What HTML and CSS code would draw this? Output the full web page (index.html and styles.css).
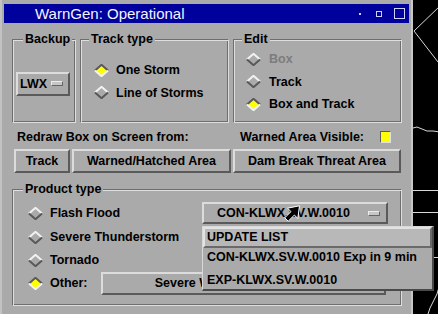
FILE: index.html
```html
<!DOCTYPE html>
<html>
<head>
<meta charset="utf-8">
<link rel="stylesheet" href="styles.css">
</head>
<body>
<svg class="defs" width="0" height="0">
  <symbol id="d-off" viewBox="0 0 15 13">
    <polygon points="1,6.5 7.5,0.5 14,6.5 7.5,12.5" fill="#aaaaaa"/>
    <polyline points="1,6.5 7.5,0.8 14,6.5" fill="none" stroke="#f2f2f2" stroke-width="2"/>
    <polyline points="1,6.5 7.5,12.2 14,6.5" fill="none" stroke="#585858" stroke-width="2"/>
  </symbol>
  <symbol id="d-on" viewBox="0 0 15 13">
    <polygon points="1,6.5 7.5,0.5 14,6.5 7.5,12.5" fill="#ffff00"/>
    <polyline points="1,6.5 7.5,0.8 14,6.5" fill="none" stroke="#585858" stroke-width="2"/>
    <polyline points="1,6.5 7.5,12.2 14,6.5" fill="none" stroke="#f2f2f2" stroke-width="2"/>
  </symbol>
</svg>
<div class="screen">
  <div class="window">
    <div class="titlebar">
      <span class="title">WarnGen: Operational</span>
      <span class="tb-icons"><i class="tb-dot"></i><i class="tb-min"></i><i class="tb-max"></i></span>
    </div>
    <div class="content">
      <div class="row-top">
        <div class="group g-backup">
          <div class="legend">Backup</div>
          <div class="g-body g-center">
            <div class="optbtn lwx"><span>LWX</span><i class="ind"></i></div>
          </div>
        </div>
        <div class="group g-track">
          <div class="legend">Track type</div>
          <div class="g-body g-radios">
            <div class="radio"><svg class="dia"><use href="#d-on"/></svg><span>One Storm</span></div>
            <div class="radio"><svg class="dia"><use href="#d-off"/></svg><span>Line of Storms</span></div>
          </div>
        </div>
        <div class="group g-edit">
          <div class="legend">Edit</div>
          <div class="g-body g-radios">
            <div class="radio disabled"><svg class="dia"><use href="#d-off"/></svg><span>Box</span></div>
            <div class="radio"><svg class="dia"><use href="#d-off"/></svg><span>Track</span></div>
            <div class="radio"><svg class="dia"><use href="#d-on"/></svg><span>Box and Track</span></div>
          </div>
        </div>
      </div>
      <div class="row-labels">
        <span>Redraw Box on Screen from:</span>
        <span class="visible">Warned Area Visible:<i class="check"></i></span>
      </div>
      <div class="row-buttons">
        <div class="btn b-track">Track</div>
        <div class="btn b-warned">Warned/Hatched Area</div>
        <div class="btn b-dam">Dam Break Threat Area</div>
      </div>
      <div class="group g-product">
        <div class="legend">Product type</div>
        <div class="g-body p-body">
          <div class="p-row r1">
            <div class="radio p-radio w1"><svg class="dia"><use href="#d-off"/></svg><span>Flash Flood</span></div>
            <div class="optbtn con"><span>CON-KLWX.SV.W.0010</span><i class="ind"></i></div>
          </div>
          <div class="p-row r2">
            <div class="radio p-radio"><svg class="dia"><use href="#d-off"/></svg><span>Severe Thunderstorm</span></div>
          </div>
          <div class="p-row r3">
            <div class="radio p-radio"><svg class="dia"><use href="#d-off"/></svg><span>Tornado</span></div>
          </div>
          <div class="p-row r4">
            <div class="radio p-radio w4"><svg class="dia"><use href="#d-on"/></svg><span>Other:</span></div>
            <div class="btn b-severe">Severe Weather Statement</div>
          </div>
        </div>
      </div>
    </div>
  </div>
  <div class="map">
    <svg width="27" height="314" viewBox="0 0 27 314">
      <polyline points="27,6 1,31 25,62" fill="none" stroke="#d8d8d8" stroke-width="1"/>
      <polyline points="0,128 4,127 9,129 14,131 20,131 27,132" fill="none" stroke="#d8d8d8" stroke-width="1"/>
      <line x1="0" y1="190.5" x2="27" y2="190.5" stroke="#d8d8d8" stroke-width="1"/>
      <line x1="0" y1="212.5" x2="27" y2="212.5" stroke="#d8d8d8" stroke-width="1"/>
      <line x1="20" y1="257.5" x2="27" y2="257.5" stroke="#d8d8d8" stroke-width="1"/>
      <polyline points="27,284 24,294 20,302 17,308 15,314" fill="none" stroke="#d8d8d8" stroke-width="1"/>
    </svg>
  </div>
</div>
<div class="popup">
  <div class="pop-item active">UPDATE LIST</div>
  <div class="pop-item i2">CON-KLWX.SV.W.0010 Exp in 9 min</div>
  <div class="pop-item i3">EXP-KLWX.SV.W.0010</div>
</div>
<svg class="cursor" width="17" height="17" viewBox="0 0 17 17">
  <polygon points="15.5,0.8 3.5,3.2 7,6.6 0.8,12.8 4.2,16.2 10.4,10 13.8,13.5" fill="#000" stroke="#fff" stroke-width="1"/>
</svg>
</body>
</html>
```
FILE: styles.css
```css
html, body {
  margin: 0;
  padding: 0;
}
body {
  width: 438px;
  height: 314px;
  overflow: hidden;
  background: #000;
  font: bold 12.5px "Liberation Sans", Arial, sans-serif;
  color: #000;
  position: relative;
}
.defs {
  position: absolute;
  width: 0;
  height: 0;
}
.screen {
  display: flex;
  height: 314px;
}
.window {
  width: 413px;
  height: 314px;
  box-sizing: border-box;
  background: #aaaaaa;
  border-left: 2px solid #c2c2c2;
  border-right: 2px solid #c8c8c8;
  padding: 4px 2px 0 2px;
  flex: none;
}
.map {
  flex: 1;
  background: #000;
}
.map svg {
  display: block;
}
.titlebar {
  height: 19px;
  background: #00009c;
  display: flex;
  align-items: center;
  padding: 0 4px 0 31px;
}
.title {
  font: normal 15px "Liberation Sans", Arial, sans-serif;
  color: #f4f4ff;
  line-height: 19px;
  flex: 1;
}
.tb-icons {
  display: flex;
  align-items: center;
}
.tb-icons i {
  display: block;
  box-sizing: border-box;
}
.tb-dot {
  width: 2px;
  height: 2px;
  background: #d0d0ff;
}
.tb-min {
  width: 6px;
  height: 6px;
  border: 1px solid #d0d0ff;
  margin-left: 15px;
}
.tb-max {
  width: 11px;
  height: 11px;
  border: 1px solid #d0d0ff;
  margin-left: 12px;
}
.content {
  padding: 0 0 0 8px;
}
.group {
  box-sizing: border-box;
  border: 1px solid;
  border-color: #6e6e6e #dedede #dedede #6e6e6e;
  box-shadow: inset 1px 1px 0 #dedede, inset -1px -1px 0 #6e6e6e;
  display: flex;
  flex-direction: column;
}
.legend {
  align-self: flex-start;
  margin: -8px 0 -6px 10px;
  padding: 0 2px;
  height: 14px;
  line-height: 14px;
  background: #aaaaaa;
}
.g-track .legend, .g-edit .legend {
  margin-left: 8px;
}
.g-body {
  flex: 1;
}
.row-top {
  display: flex;
  gap: 4px;
  margin-top: 16px;
  height: 84px;
}
.g-backup { width: 64px; }
.g-track { width: 149px; }
.g-edit { width: 169px; }
.g-center {
  display: flex;
  align-items: center;
  padding: 5px 0 0 3px;
}
.g-radios {
  display: flex;
  flex-direction: column;
  justify-content: center;
  padding-top: 1px;
}
.g-track .g-radios { padding-left: 13px; }
.g-edit .g-radios { padding-left: 12px; }
.radio {
  display: flex;
  align-items: center;
  height: 22.5px;
}
.dia {
  width: 15px;
  height: 13px;
  margin-right: 7px;
  flex: none;
}
.g-edit .dia { margin-right: 8px; }
.disabled span {
  color: #7c7c7c;
}
.optbtn, .btn {
  box-sizing: border-box;
  background: #aaaaaa;
  border: 2px solid;
  border-color: #dcdcdc #5a5a5a #5a5a5a #dcdcdc;
  display: flex;
  align-items: center;
}
.ind {
  display: block;
  width: 12px;
  height: 5px;
  box-sizing: border-box;
  background: #c6c6c6;
  border: 1px solid;
  border-color: #ececec #666 #666 #ececec;
}
.lwx {
  width: 54px;
  height: 24px;
  padding-left: 2px;
}
.lwx .ind {
  margin-left: 4px;
}
.row-labels {
  display: flex;
  align-items: center;
  margin-top: 7px;
  height: 14px;
  padding: 0 18px 0 5px;
}
.visible {
  margin-left: auto;
  display: flex;
  align-items: center;
}
.check {
  display: block;
  width: 11px;
  height: 12px;
  box-sizing: border-box;
  margin-left: 16px;
  background: #ffff00;
  border: 1px solid;
  border-color: #5a5a5a #e0e0e0 #e0e0e0 #5a5a5a;
}
.row-buttons {
  display: flex;
  gap: 2px;
  margin: 5px 0 0 2px;
  height: 24px;
}
.btn {
  justify-content: center;
  height: 24px;
}
.b-track { width: 56px; }
.b-warned { width: 159px; }
.b-dam { width: 168px; }
.g-product {
  width: 390px;
  height: 117px;
  margin-top: 16px;
}
.p-body {
  padding: 11px 0 0 15px;
  display: flex;
  flex-direction: column;
}
.p-row {
  display: flex;
  align-items: center;
  height: 24px;
}
.p-row.r3 {
  height: 22px;
}
.w1 { width: 174px; }
.w4 { width: 73px; }
.con {
  width: 186px;
  height: 22px;
  padding: 0 6px 0 13px;
}
.con .ind {
  margin-left: auto;
}
.b-severe {
  width: 285px;
  height: 23px;
  padding-right: 20px;
}
.popup {
  position: absolute;
  left: 202px;
  top: 226px;
  width: 232px;
  height: 65px;
  box-sizing: border-box;
  background: #aaaaaa;
  border: 1px solid;
  border-color: #d8d8d8 #4a4a4a #4a4a4a #d8d8d8;
  border-right-width: 2px;
  border-bottom-width: 2px;
  z-index: 2;
}
.pop-item {
  padding-left: 4px;
  box-sizing: border-box;
}
.pop-item.active {
  height: 21px;
  line-height: 17px;
  background: #b8b8b8;
  border: 2px solid;
  border-color: #e2e2e2 #6a6a6a #6a6a6a #e2e2e2;
  padding-left: 2px;
}
.pop-item.i2 {
  height: 22px;
  line-height: 18px;
}
.pop-item.i3 {
  height: 19px;
  line-height: 20px;
}
.cursor {
  position: absolute;
  left: 284px;
  top: 205px;
  z-index: 3;
}
```
